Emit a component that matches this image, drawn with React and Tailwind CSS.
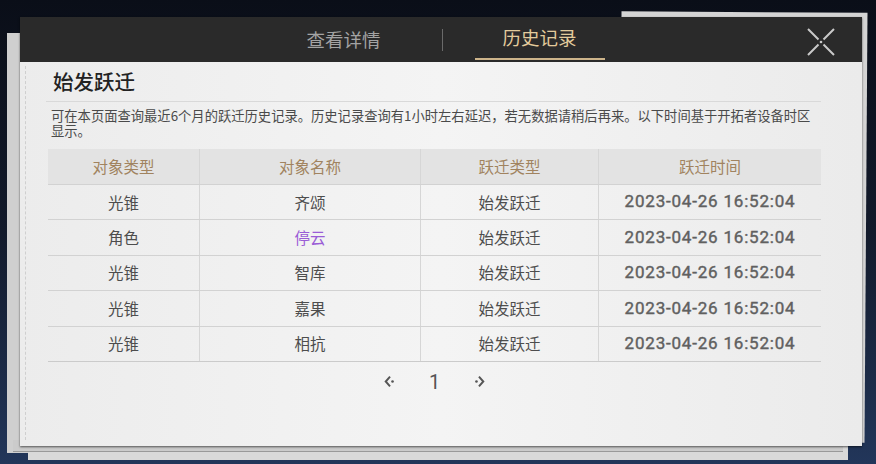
import React from 'react';

const CJK = '"Noto Sans CJK SC", "Noto Sans", sans-serif';
const NUM = 'Roboto, "Noto Sans CJK SC", sans-serif';

const rows = [
  { type: '光锥', name: '齐颂', kind: '始发跃迁', time: '2023-04-26 16:52:04' },
  { type: '角色', name: '停云', kind: '始发跃迁', time: '2023-04-26 16:52:04', rare: true },
  { type: '光锥', name: '智库', kind: '始发跃迁', time: '2023-04-26 16:52:04' },
  { type: '光锥', name: '嘉果', kind: '始发跃迁', time: '2023-04-26 16:52:04' },
  { type: '光锥', name: '相抗', kind: '始发跃迁', time: '2023-04-26 16:52:04' },
];

const cols = 'grid grid-cols-[152px_221px_178px_222px]';

// ─── Pieces ─────────────────────────────────────────────────────────────────

const CloseIcon = () => (
  <svg width="28" height="28" viewBox="0 0 28 28" fill="none">
    <path d="M1 1 L11.5 11.5 M16.5 16.5 L27 27 M27 1 L16.5 11.5 M11.5 16.5 L1 27" stroke="#c9c9c9" strokeWidth="2" />
    <circle cx="14" cy="14" r="1.3" fill="#c9c9c9" />
  </svg>
);

const Chevron = ({ dir }) => (
  <svg width="11" height="13" viewBox="0 0 10 12" fill="none">
    {dir === 'left' ? (
      <>
        <path d="M5.5 1.5 L1.5 6 L5.5 10.5" stroke="#555" strokeWidth="1.8" />
        <circle cx="7.8" cy="6" r="1.2" fill="#555" />
      </>
    ) : (
      <>
        <path d="M4.5 1.5 L8.5 6 L4.5 10.5" stroke="#555" strokeWidth="1.8" />
        <circle cx="2.2" cy="6" r="1.2" fill="#555" />
      </>
    )}
  </svg>
);

const Cell = ({ children, last, className = '' }) => (
  <div className={`flex items-center justify-center ${last ? '' : 'border-r border-[#d6d6d6]'} ${className}`}>
    {children}
  </div>
);

export default function App() {
  return (
    <div className="relative w-[876px] h-[464px] overflow-hidden bg-gradient-to-b from-[#0a0e18] via-[#121a2b] to-[#22365a]" style={{ fontFamily: CJK }}>
      {/* back sheets */}
      <div className="absolute left-[7px] top-[33px] w-[40px] h-[420px] bg-[#cfcfcf] border-r-2 border-[#555]" />
      <div className="absolute left-[28px] top-[440px] w-[820px] h-[20px] bg-[#d9d9d9]" />
      <div className="absolute left-[13px] top-[440px] w-[830px] h-[12px] bg-[#cbcbcb] border-b border-[#999]" />
      <div className="absolute left-[620px] top-[12px] w-[246px] h-[430px] bg-[#d4d4d4] rotate-[0.4deg]" />

      {/* main panel */}
      <div className="relative ml-[20px] mt-[17px] w-[842px] h-[429px] flex flex-col bg-gradient-to-r from-[#ececec] via-[#f4f4f4] to-[#ebebeb] shadow-[0_1px_2px_rgba(0,0,0,0.6)]">
        {/* header */}
        <div className="h-[45px] bg-[#2a2a2a] flex items-center justify-center relative">
          <div className="w-[196px] text-center text-[18.5px] text-[#a3a3a3] leading-[45px]">查看详情</div>
          <div className="w-px h-[22px] bg-[#6a6a6a]" />
          <div className="w-[194px] h-[45px] flex flex-col items-center">
            <div className="text-[18.5px] text-[#e3cb9c] leading-[41px]">历史记录</div>
            <div className="w-[130px] h-[2px] bg-[#cdb48a]" />
          </div>
          <div className="absolute right-[27px] top-[11px]">
            <CloseIcon />
          </div>
        </div>

        {/* body */}
        <div className="relative flex-1 pl-[26px] pr-[41px]">
          <div className="absolute left-[5px] top-[4px] bottom-[6px] border-l border-dashed border-[#cfcfcf]" />
          <div className="pt-[5px] pl-[7px] text-[20.5px] font-medium leading-[28px] text-[#222]">始发跃迁</div>
          <div className="mt-[6px] border-t border-[#d9d9d9]" />
          <p className="mt-[6px] pl-[5px] w-[770px] text-[13.3px] leading-[15px] text-[#4a4a4a]">
            可在本页面查询最近6个月的跃迁历史记录。历史记录查询有1小时左右延迟，若无数据请稍后再来。以下时间基于开拓者设备时区显示。
          </p>

          <div className="mt-[11px] ml-[2px] w-[773px]">
            <div className={`${cols} h-[35px] bg-[#e3e3e3] text-[15.5px] text-[#a1835f]`}>
              <Cell>对象类型</Cell>
              <Cell>对象名称</Cell>
              <Cell>跃迁类型</Cell>
              <Cell last>跃迁时间</Cell>
            </div>
            {rows.map((r, i) => (
              <div key={i} className={`${cols} h-[35.4px] border-t border-[#d2d2d2] text-[15.5px] text-[#4d4d4d]`}>
                <Cell>{r.type}</Cell>
                <Cell className={r.rare ? 'text-[#9a5cd6]' : ''}>{r.name}</Cell>
                <Cell>{r.kind}</Cell>
                <Cell last>
                  <span className="text-[17px] font-normal tracking-[0.8px] text-[#606060] [-webkit-text-stroke:0.4px_#606060]" style={{ fontFamily: NUM }}>{r.time}</span>
                </Cell>
              </div>
            ))}
            <div className="border-t border-[#cbcbcb]" />

            {/* pagination */}
            <div className="h-[40px] flex items-center justify-center gap-[34px]">
              <Chevron dir="left" />
              <span className="text-[20px] text-[#555] leading-none" style={{ fontFamily: NUM }}>1</span>
              <Chevron dir="right" />
            </div>
          </div>
        </div>
      </div>
    </div>
  );
}
